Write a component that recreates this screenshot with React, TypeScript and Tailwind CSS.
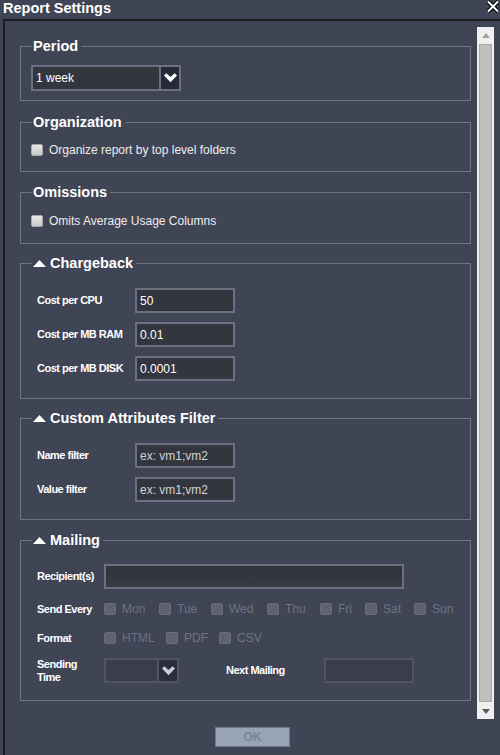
import React from "react";

const Tri = () => (
  <svg width="13" height="7" viewBox="0 0 13 7" className="mr-[4px] block">
    <polygon points="0,7 6.5,0 13,7" fill="#ffffff" />
  </svg>
);

function Section({
  title,
  collapsible,
  className,
  children,
}: {
  title: string;
  collapsible?: boolean;
  className?: string;
  children: React.ReactNode;
}) {
  return (
    <fieldset className={`w-[451px] border border-[#6e7482] ${className ?? ""}`}>
      <legend className="ml-[11px] flex h-[16px] items-center pl-[1px] pr-[3px] text-[14.5px] font-bold leading-[16px] text-white">
        {collapsible && <Tri />}
        <span>{title}</span>
      </legend>
      {children}
    </fieldset>
  );
}

const Chevron = ({ color = "#ffffff" }: { color?: string }) => (
  <svg width="13" height="10" viewBox="0 0 12 9">
    <path d="M0 2.2 L2.2 0 L6 3.6 L9.8 0 L12 2.2 L6 8.5 Z" fill={color} />
  </svg>
);

function Box({ disabled }: { disabled?: boolean }) {
  return disabled ? (
    <div className="h-[12px] w-[12px] shrink-0 rounded-[2px] border border-[#6a6f7c] bg-[#5e636f]" />
  ) : (
    <div className="h-[12px] w-[12px] shrink-0 rounded-[2px] border border-[#a9a9a9] bg-gradient-to-b from-[#e8e8e8] to-[#c9c9c9]" />
  );
}

function TextBox({ value, placeholder, w = "w-[100px]" }: { value?: string; placeholder?: string; w?: string }) {
  return (
    <div
      className={`${w} flex h-[25px] items-center border-2 border-[#6c7181] bg-[#33363e] pl-[3px] text-[12px] leading-[14px] ${
        placeholder ? "text-[#d2d4d8]" : "text-white"
      }`}
    >
      {value ?? placeholder}
    </div>
  );
}

const lbl = "text-[11px] font-bold leading-[13px] tracking-[-0.5px] text-white";

function Row({ label, children }: { label: string; children: React.ReactNode }) {
  return (
    <div className="flex h-[25px] items-center">
      <div className={`w-[98px] ${lbl}`}>{label}</div>
      {children}
    </div>
  );
}

function Opt({ label, w }: { label: string; w: string }) {
  return (
    <div className={`flex items-center ${w}`}>
      <Box disabled />
      <span className="ml-[6px] text-[12px] leading-[14px] text-[#6e7381]">{label}</span>
    </div>
  );
}

export default function App() {
  return (
    <div className="relative h-[755px] w-[500px] overflow-hidden bg-[#3f4555] font-['Liberation_Sans',Arial,sans-serif]">
      <div className="h-[19px] pl-[3px] text-[14.5px] font-bold leading-[16px] text-white">Report Settings</div>
      <svg className="absolute right-0 top-0" width="14" height="13" viewBox="0 0 14 13">
        <path d="M2 1.5 L12 11.5 M12 1.5 L2 11.5" stroke="#000000" strokeWidth="4.2" />
        <path d="M2 1.5 L12 11.5 M12 1.5 L2 11.5" stroke="#ffffff" strokeWidth="2" />
      </svg>

      <div className="ml-[3px] flex h-[736px] border-l-2 border-t-2 border-[#1c1e24]">
        <div className="w-[472px] pl-[15px]">
          <Section title="Period" className="mt-[17px]">
            <div className="pl-[10px] pt-[11px] pb-[9px]">
              <div className="flex h-[26px] w-[150px] border-2 border-[#6c7181] bg-[#33363e]">
                <div className="flex flex-1 items-center pl-[3px] text-[12px] leading-[14px] text-white">1 week</div>
                <div className="flex w-[20px] items-center justify-center border-l-2 border-[#6c7181] bg-[#262a39]">
                  <Chevron />
                </div>
              </div>
            </div>
          </Section>

          <Section title="Organization" className="mt-[13px]">
            <div className="mt-[12px] mb-[13px] flex h-[16px] items-center pl-[10px]">
              <Box />
              <span className="ml-[6px] text-[12px] leading-[14px] text-[#eeeeee]">Organize report by top level folders</span>
            </div>
          </Section>

          <Section title="Omissions" className="mt-[12px]">
            <div className="mt-[13px] mb-[14px] flex h-[16px] items-center pl-[10px]">
              <Box />
              <span className="ml-[6px] text-[12px] leading-[14px] text-[#eeeeee]">Omits Average Usage Columns</span>
            </div>
          </Section>

          <Section title="Chargeback" collapsible className="mt-[11px]">
            <div className="flex flex-col gap-[9px] pl-[16px] pt-[17px] pb-[17px]">
              <Row label="Cost per CPU">
                <TextBox value="50" />
              </Row>
              <Row label="Cost per MB RAM">
                <TextBox value="0.01" />
              </Row>
              <Row label="Cost per MB DISK">
                <TextBox value="0.0001" />
              </Row>
            </div>
          </Section>

          <Section title="Custom Attributes Filter" collapsible className="mt-[11px]">
            <div className="flex flex-col gap-[9px] pl-[16px] pt-[17px] pb-[17px]">
              <Row label="Name filter">
                <TextBox placeholder="ex: vm1;vm2" />
              </Row>
              <Row label="Value filter">
                <TextBox placeholder="ex: vm1;vm2" />
              </Row>
            </div>
          </Section>

          <Section title="Mailing" collapsible className="mt-[12px]">
            <div className="flex flex-col pl-[16px] pt-[16px] pb-[17px]">
              <div className="flex h-[25px] items-center">
                <div className={`w-[67px] ${lbl}`}>Recipient(s)</div>
                <div className="h-[25px] w-[300px] border-2 border-[#6c7181] bg-gradient-to-b from-[#2f3239] to-[#383b44]" />
              </div>
              <div className="mt-[12px] flex h-[16px] items-center">
                <div className={`w-[67px] ${lbl}`}>Send Every</div>
                <Opt label="Mon" w="w-[55px]" />
                <Opt label="Tue" w="w-[52px]" />
                <Opt label="Wed" w="w-[56px]" />
                <Opt label="Thu" w="w-[53px]" />
                <Opt label="Fri" w="w-[45px]" />
                <Opt label="Sat" w="w-[49px]" />
                <Opt label="Sun" w="w-[40px]" />
              </div>
              <div className="mt-[13px] flex h-[16px] items-center">
                <div className={`w-[67px] ${lbl}`}>Format</div>
                <Opt label="HTML" w="w-[62px]" />
                <Opt label="PDF" w="w-[53px]" />
                <Opt label="CSV" w="w-[45px]" />
              </div>
              <div className="mt-[12px] flex h-[25px] items-center">
                <div className={`w-[67px] ${lbl}`}>
                  Sending
                  <br />
                  Time
                </div>
                <div className="flex h-[25px] w-[75px] border-2 border-[#4f5463] bg-[#3a3e4a]">
                  <div className="flex-1" />
                  <div className="flex w-[20px] items-center justify-center border-l-2 border-[#4f5463] bg-[#2a2e3e]">
                    <Chevron color="#c9ccd3" />
                  </div>
                </div>
                <div className={`ml-[47px] w-[98px] ${lbl}`}>Next Mailing</div>
                <div className="h-[25px] w-[90px] border-2 border-[#4f5463] bg-[#3a3e4a]" />
              </div>
            </div>
          </Section>

          <div className="ml-[195px] mt-[26px] flex h-[20px] w-[75px] items-center justify-center border border-[#6f7788] bg-[#98a3b5] text-[12px] font-bold text-[#7c8594]">
            OK
          </div>
        </div>

        <div className="mt-[6px] flex h-[692px] w-[17px] flex-col items-center bg-[#f0f0f0]">
          <svg width="8" height="5" viewBox="0 0 8 5" className="mt-[6px]">
            <polygon points="0,5 4,0 8,5" fill="#a3a3a3" />
          </svg>
          <div className="mt-[6px] h-[658px] w-[13px] border border-[#a9a9a9] bg-[#bebebe]" />
          <svg width="8" height="5" viewBox="0 0 8 5" className="mt-[7px]">
            <polygon points="0,0 8,0 4,5" fill="#5a5a5a" />
          </svg>
        </div>
      </div>
    </div>
  );
}
